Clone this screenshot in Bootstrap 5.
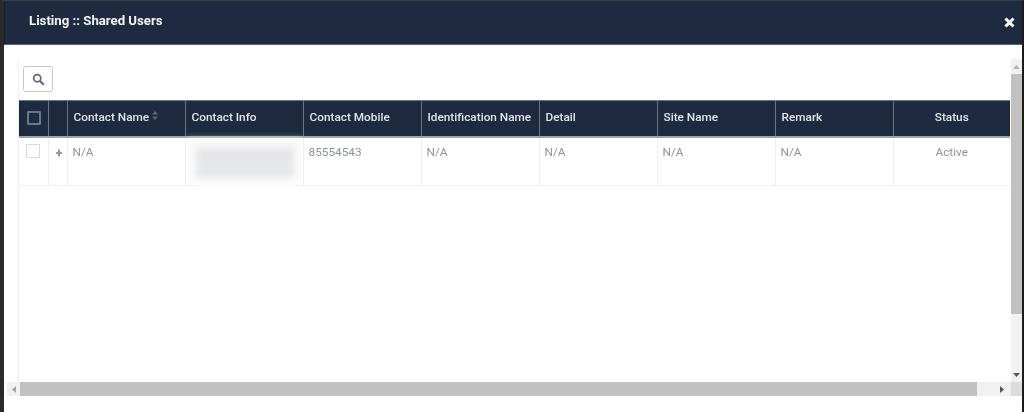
<!DOCTYPE html>
<html lang="en">
<head>
<meta charset="utf-8">
<title>Listing :: Shared Users</title>
<link href="https://cdn.jsdelivr.net/npm/bootstrap@5.3.0/dist/css/bootstrap.min.css" rel="stylesheet">
<style>
html,body{height:412px;overflow:hidden;background:#fff}
body{font-family:Roboto,"Liberation Sans",sans-serif;font-size:11.8px;color:#8b9199}
.frame{height:412px;border-left:4px solid #2a2a2a;border-right:2px solid #1c1c1c;border-top:1px solid #3a3d42;background:#fff;filter:blur(.4px)}
.head-bar{height:44px;background:#1e2a40;color:#f4f5f7;padding:0 7px 0 24px;border-bottom:1px solid #5c6575;border-left:1px solid #16202f}
.head-title{font-size:13.2px;font-weight:700;margin:0;position:relative;top:-2px}
.x-btn{border:0;background:none;padding:0;line-height:0}
.scroller{margin:14px 0 0 3px;height:337px}
.view{min-width:0;margin-left:11px;margin-right:1px;border-left:1px solid #eef0f2}
.tool-row{height:41px;padding:7px 0 0 4px}
.find-btn{width:30px;height:26px;padding:0;background:#fff;border:1px solid #c3c9d3;border-radius:3px;line-height:0}
.grid-table{table-layout:fixed;width:991px;margin:0;border-collapse:collapse;font-size:11.8px}
.grid-table th{background:#1e2a40;color:#e2e5ea;font-weight:500;height:36px;padding:0 6px;vertical-align:middle;border:1px solid #6d7686;border-bottom:2px solid #9aa2ae;white-space:nowrap}
.grid-table td{height:49px;padding:6px 5px 0;vertical-align:top;border:1px solid #eceef2;color:#8d939b;white-space:nowrap}
.grid-table th:first-child,.grid-table td:first-child{border-left:0}
.grid-table th:last-child,.grid-table td:last-child{border-right:0}
.box{display:block;width:14px;height:14px;margin-left:2px}
.box-head{border:2px solid #66788c;background:#1e2a40;border-radius:1px;margin-top:-1px}
.box-row{border:1px solid #d3dce3;background:#fff;margin-top:0}
.plus-cell{color:#0f1319;font-weight:900;font-size:12.5px;padding-left:0!important;text-align:right;padding-right:4px!important;padding-top:6px!important}
.sort-mark{display:inline-block;vertical-align:3px;margin-left:3px;line-height:0}
.smudge{display:block;width:98px;height:30px;margin:9px 0 0 10px;background:linear-gradient(#e9eaec,#e3e4e6 30%,#e9eaec 55%,#e3e4e6 80%,#e9eaec);box-shadow:0 0 0 8px #fafafa;filter:blur(3px)}
.smudge-cell{padding:0!important}
.track-v{width:11px;background:#f1f1f1;flex:none}
.track-h{height:14px;background:#f1f1f1}
.thumb{background:#c1c1c1}
.thumb-v{height:240px;flex:none}
.thumb-h{width:957px;height:14px;flex:none}
.step{height:15px;flex:none;line-height:0}
.step-left{width:13px;flex:none;line-height:0}
.corner{width:11px;flex:none;background:#dcdcdc}
</style>
</head>
<body>
<div class="frame d-flex flex-column">
  <div class="head-bar d-flex align-items-center justify-content-between">
    <h5 class="head-title">Listing :: Shared Users</h5>
    <button class="x-btn" type="button" aria-label="Close">
      <svg width="11" height="11" viewBox="0 0 11 11"><path d="M1.5 1.5 9.5 9.5M9.5 1.5 1.5 9.5" stroke="#fff" stroke-width="3" fill="none"/></svg>
    </button>
  </div>
  <div class="scroller d-flex flex-column">
    <div class="d-flex flex-grow-1" style="min-height:0">
      <div class="view flex-grow-1">
        <div class="tool-row">
          <button class="find-btn" type="button" aria-label="Search">
            <svg width="13" height="13" viewBox="0 0 13 13"><circle cx="5.2" cy="5.2" r="3.6" fill="none" stroke="#5f6b7c" stroke-width="1.7"/><path d="M8 8l3.8 3.8" stroke="#5f6b7c" stroke-width="2.2"/></svg>
          </button>
        </div>
        <table class="table grid-table">
          <colgroup><col style="width:29px"><col style="width:19px"><col style="width:118px"><col style="width:118px"><col style="width:118px"><col style="width:118px"><col style="width:118px"><col style="width:118px"><col style="width:118px"><col style="width:117px"></colgroup>
          <thead>
            <tr>
              <th><span class="box box-head"></span></th>
              <th></th>
              <th>Contact Name<span class="sort-mark"><svg width="6" height="9" viewBox="0 0 6 9"><path d="M3 0 6 3.5H0zM3 9 0 5.5H6z" fill="#5f6878"/></svg></span></th>
              <th>Contact Info</th>
              <th>Contact Mobile</th>
              <th>Identification Name</th>
              <th>Detail</th>
              <th>Site Name</th>
              <th>Remark</th>
              <th class="text-center">Status</th>
            </tr>
          </thead>
          <tbody>
            <tr>
              <td><span class="box box-row"></span></td>
              <td class="plus-cell">+</td>
              <td>N/A</td>
              <td class="smudge-cell"><span class="smudge"></span></td>
              <td>85554543</td>
              <td>N/A</td>
              <td>N/A</td>
              <td>N/A</td>
              <td>N/A</td>
              <td class="text-center">Active</td>
            </tr>
          </tbody>
        </table>
      </div>
      <div class="track-v d-flex flex-column">
        <div class="step d-flex align-items-center justify-content-center"><svg width="7" height="4" viewBox="0 0 7 4"><path d="M3.5 0 7 4H0z" fill="#b5b5b5"/></svg></div>
        <div class="thumb thumb-v"></div>
        <div class="flex-grow-1"></div>
        <div class="step d-flex align-items-center justify-content-center"><svg width="7" height="4" viewBox="0 0 7 4"><path d="M3.5 4 0 0H7z" fill="#555"/></svg></div>
      </div>
    </div>
    <div class="d-flex">
      <div class="track-h d-flex flex-grow-1">
        <div class="step-left d-flex align-items-center justify-content-center"><svg width="4" height="7" viewBox="0 0 4 7"><path d="M0 3.5 4 0V7z" fill="#a5a5a5"/></svg></div>
        <div class="thumb thumb-h"></div>
        <div class="flex-grow-1 d-flex align-items-center justify-content-end" style="padding-right:7px"><svg width="4" height="7" viewBox="0 0 4 7"><path d="M4 3.5 0 7V0z" fill="#555"/></svg></div>
      </div>
      <div class="corner"></div>
    </div>
  </div>
</div>
</body>
</html>
